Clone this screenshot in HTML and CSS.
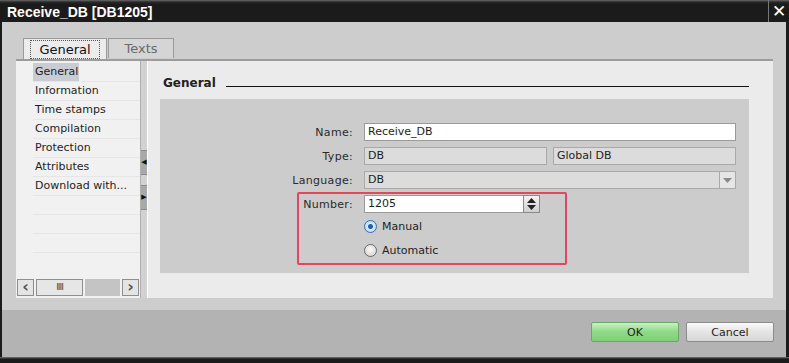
FILE: index.html
```html
<!DOCTYPE html>
<html lang="en">
<head>
    <meta charset="UTF-8">
    <title>Receive_DB [DB1205]</title>
    <link rel="stylesheet" href="styles.css">
</head>
<body>
<div class="window">
    <div class="titlebar">
        <span class="title">Receive_DB [DB1205]</span>
        <span class="close">&#10005;</span>
    </div>

    <div class="body">
        <div class="tabs">
            <div class="tab active"><span class="focus">General</span></div>
            <div class="tab">Texts</div>
        </div>

        <div class="panel">
            <div class="nav">
                <ul class="nav-list">
                    <li class="selected"><span>General</span></li>
                    <li><span>Information</span></li>
                    <li><span>Time stamps</span></li>
                    <li><span>Compilation</span></li>
                    <li><span>Protection</span></li>
                    <li><span>Attributes</span></li>
                    <li><span>Download with...</span></li>
                    <li></li>
                    <li></li>
                    <li></li>
                </ul>
                <div class="hscroll">
                    <div class="sbtn">&#8249;</div>
                    <div class="thumb">IIII</div>
                    <div class="track"></div>
                    <div class="sbtn">&#8250;</div>
                </div>
            </div>

            <div class="vscroll">
                <div class="seg light"></div>
                <div class="seg dark"><span class="arr">&#9664;</span></div>
                <div class="seg light short"></div>
                <div class="seg dark"><span class="arr">&#9654;</span></div>
                <div class="seg light grow"></div>
            </div>

            <div class="content">
                <div class="section-head">
                    <span>General</span>
                    <div class="rule"></div>
                </div>

                <div class="form-box">
                    <div class="row">
                        <label>Name:</label>
                        <div class="field edit wide">Receive_DB</div>
                    </div>
                    <div class="row">
                        <label>Type:</label>
                        <div class="field ro half">DB</div>
                        <div class="field ro half">Global DB</div>
                    </div>
                    <div class="row">
                        <label>Language:</label>
                        <div class="field ro wide combo">
                            <span>DB</span>
                            <span class="drop"><svg width="9" height="5" viewBox="0 0 9 5"><path d="M0 0h9L4.5 5z" fill="#8a8a8a"/></svg></span>
                        </div>
                    </div>
                    <div class="row">
                        <label>Number:</label>
                        <div class="field edit number">
                            <span>1205</span>
                            <span class="spin">
                                <svg width="9" height="12" viewBox="0 0 9 12"><path d="M4.5 0L9 5H0z M4.5 12L9 7H0z" fill="#222"/></svg>
                            </span>
                        </div>
                    </div>
                    <div class="radio-row">
                        <span class="radio on"></span>
                        <span>Manual</span>
                    </div>
                    <div class="radio-row">
                        <span class="radio"></span>
                        <span>Automatic</span>
                    </div>

                    <div class="highlight"></div>
                </div>
            </div>
        </div>

        <div class="footer">
            <button class="btn ok">OK</button>
            <button class="btn">Cancel</button>
        </div>
    </div>
    <div class="bottom-edge"></div>
</div>
</body>
</html>
```

FILE: styles.css
```css
body {
    margin: 0;
    background: #1b1b1b;
    font-family: "DejaVu Sans", Verdana, sans-serif;
    font-size: 11px;
    color: #1e1e1e;
}
.window {
    width: 789px;
    height: 363px;
    display: flex;
    flex-direction: column;
    overflow: hidden;
}
.titlebar {
    height: 22px;
    flex: none;
    display: flex;
    align-items: center;
    justify-content: space-between;
    background: linear-gradient(#6a6a6a 0, #2a2a2a 2px, #1b1b1b 4px);
}
.title {
    color: #fff;
    font-family: "Liberation Sans", Arial, sans-serif;
    font-weight: bold;
    font-size: 14px;
    padding-left: 7px;
    padding-top: 1px;
}
.close {
    width: 20px;
    height: 22px;
    border-left: 1px solid #777;
    color: #fff;
    font-size: 17px;
    font-weight: bold;
    line-height: 22px;
    text-align: center;
}
.body {
    flex: 1;
    display: flex;
    flex-direction: column;
    background: #cdcdcd;
    border-left: 2px solid #1b1b1b;
    border-right: 3px solid #1b1b1b;
}
.tabs {
    display: flex;
    margin: 16px 0 0 21px;
    height: 21px;
}
.tab {
    width: 64px;
    height: 19px;
    margin-right: 1px;
    border: 1px solid #9a9a9a;
    border-bottom: none;
    background: #d5d5d5;
    color: #6a6a6a;
    font-size: 13px;
    text-align: center;
    line-height: 20px;
}
.tab.active {
    width: 82px;
    height: 21px;
    background: #ececec;
    color: #111;
}
.focus {
    display: inline-block;
    margin-top: 1px;
    padding: 0 8px;
    line-height: 17px;
    border: 1px dotted #555;
}
.panel {
    display: flex;
    height: 237px;
    margin: 0 13px 0 14px;
    border-top: 2px solid #9c9c9c;
    background: #ebebeb;
}
.nav {
    flex: none;
    width: 124px;
    display: flex;
    flex-direction: column;
    background: #f1f1f1;
}
.nav-list {
    flex: 1;
    list-style: none;
    margin: 0;
    padding: 2px 0 0 17px;
    overflow: hidden;
}
.nav-list li {
    height: 18px;
    line-height: 18px;
    border-bottom: 1px solid #e6e6e6;
    white-space: nowrap;
}
.nav-list li span {
    padding: 0 1px 0 2px;
    display: inline-block;
}
.nav-list li.selected span {
    background: #c9ccd3;
}
.hscroll {
    height: 18px;
    display: flex;
    padding: 0 1px 1px 1px;
    gap: 2px;
}
.sbtn {
    flex: none;
    width: 15px;
    height: 15px;
    border: 1px solid #8e8e8e;
    background: #e4e4e4;
    color: #555;
    font-size: 16px;
    font-weight: bold;
    line-height: 13px;
    text-align: center;
}
.thumb {
    flex: none;
    width: 45px;
    height: 15px;
    border: 1px solid #8e8e8e;
    background: #e6e6e6;
    color: #444;
    font-size: 9px;
    line-height: 15px;
    text-align: center;
    letter-spacing: -1px;
}
.track {
    flex: 1;
    background: #c4c4c4;
    height: 17px;
}
.vscroll {
    flex: none;
    width: 6px;
    display: flex;
    flex-direction: column;
    background: #c8c8c8;
    border-left: 1px solid #b0b0b0;
    border-right: 1px solid #fff;
}
.seg {
    border-bottom: 1px solid #8c8c8c;
}
.seg.light { height: 89px; background: #d2d2d2; }
.seg.short { height: 10px; }
.seg.dark { height: 23px; background: #a9a9a9; }
.seg.grow { flex: 1; border-bottom: none; }
.arr {
    display: block;
    font-size: 7px;
    line-height: 23px;
    text-align: center;
    color: #111;
}
.content {
    flex: 1;
    min-width: 0;
    padding: 15px 24px 25px 12px;
    display: flex;
    flex-direction: column;
}
.section-head {
    display: flex;
    align-items: flex-end;
    height: 14px;
    gap: 10px;
    font-size: 12px;
    font-weight: bold;
    padding-left: 3px;
    color: #222;
}
.section-head span {
    line-height: 13px;
}
.rule {
    flex: 1;
    height: 1px;
    background: #111;
    margin-bottom: 3px;
}
.form-box {
    position: relative;
    flex: 1;
    margin-top: 9px;
    background: #cccccc;
    padding: 24px 12px 0 0;
}
.row {
    display: flex;
    align-items: center;
    height: 18px;
    margin-bottom: 6px;
}
.row label {
    flex: none;
    width: 193px;
    text-align: right;
    margin-right: 11px;
    color: #2a2a2a;
    letter-spacing: 0.3px;
}
.field {
    flex: none;
    box-sizing: border-box;
    height: 18px;
    line-height: 16px;
    padding: 0 3px;
    border: 1px solid #a2a2a2;
}
.field.edit { background: #fff; border-color: #9a9a9a; }
.field.ro { background: #dcdcdc; border-color: #a9a9a9; }
.field.wide { width: 372px; }
.field.half { width: 183px; margin-right: 6px; }
.combo {
    display: flex;
    justify-content: space-between;
    padding-right: 0;
}
.drop {
    width: 15px;
    border-left: 1px solid #a9a9a9;
    background: #e6e6e6;
    display: flex;
    align-items: center;
    justify-content: center;
}
.number {
    width: 163px;
    display: flex;
    justify-content: space-between;
    padding-right: 0;
}
.spin {
    width: 15px;
    height: 16px;
    margin-right: -14px;
    border: 1px solid #8a8a8a;
    margin-top: -1px;
    background: linear-gradient(#f4f4f4, #cfcfcf);
    display: flex;
    align-items: center;
    justify-content: center;
}
.radio-row {
    display: flex;
    align-items: center;
    gap: 5px;
    height: 14px;
    margin: 0 0 10px 204px;
}
.radio {
    box-sizing: border-box;
    width: 13px;
    height: 13px;
    border-radius: 50%;
    border: 1px solid #6a6a6a;
    background: radial-gradient(circle at 50% 40%, #fafafa, #cfcfcf);
}
.radio.on {
    border-color: #3a6ea8;
    background: radial-gradient(circle, #1c5fb0 0 2px, #d8ecff 3px, #bcd6f2 6px);
}
.highlight {
    position: absolute;
    left: 137px;
    top: 93px;
    width: 266px;
    height: 69px;
    border: 2px solid #e0485d;
    border-radius: 2px;
}
.footer {
    flex: 1;
    margin-top: 12px;
    background: #b3b3b3;
    display: flex;
    justify-content: flex-end;
    align-items: flex-start;
    gap: 7px;
    padding: 12px 12px 0 0;
}
.btn {
    width: 88px;
    height: 20px;
    font-family: "DejaVu Sans", Verdana, sans-serif;
    font-size: 11px;
    color: #1e1e1e;
    border: 1px solid #8c8c8c;
    border-radius: 2px;
    background: linear-gradient(#fafafa, #e4e4e4 50%, #d6d6d6);
    padding: 0;
}
.btn.ok {
    border-color: #6aa86a;
    background: linear-gradient(#c9f0c2, #8fd987 50%, #7fcf77);
}
.bottom-edge {
    height: 6px;
    flex: none;
    background: linear-gradient(#777 0, #1b1b1b 2px);
}
```
